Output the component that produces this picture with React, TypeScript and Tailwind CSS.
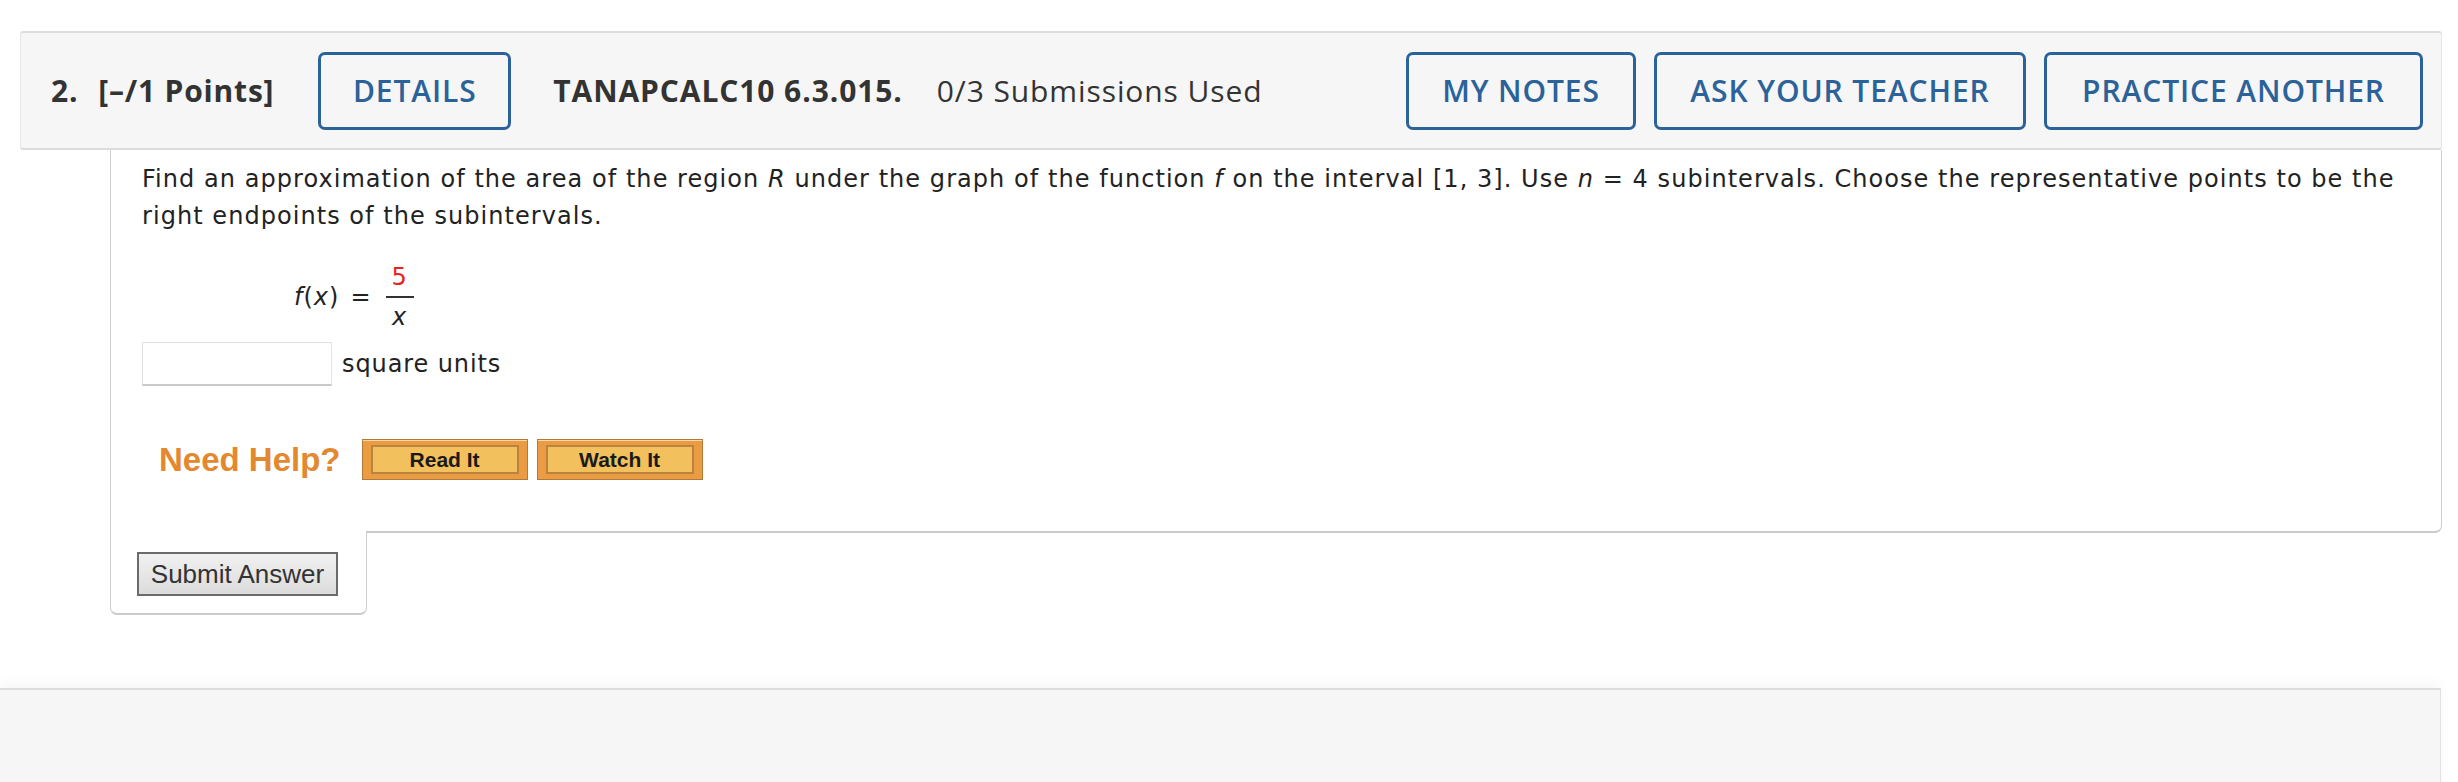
import React from "react";

const verdana = { fontFamily: '"DejaVu Sans", Verdana, sans-serif' };

function HeaderButton({ label, w }: { label: string; w: string }) {
  return (
    <div
      className={`${w} h-[78px] flex items-center justify-center rounded-[7px] border-[3px] border-[#2b6299] text-[#2b6299] text-[30px] font-semibold tracking-[0.9px]`}
    >
      {label}
    </div>
  );
}

function HelpButton({ label }: { label: string }) {
  return (
    <div className="w-[166px] h-[41px] border border-[#b07a38] bg-[#eb9c42] p-[5px_8px] shadow-[inset_0_1px_0_#f8d9a8]">
      <div
        className="h-full w-full border-2 border-[#b8843f] bg-[#f2c05d] flex items-center justify-center text-[21px] font-bold text-[#1a1a1a]"
        style={{ fontFamily: '"Liberation Sans", Arial, sans-serif' }}
      >
        {label}
      </div>
    </div>
  );
}

export default function App() {
  return (
    <div className="w-[2458px] h-[782px] overflow-hidden bg-white text-[#333]">
      <div className="pt-[31px] pl-[20px] pr-[16px]">
        {/* Header */}
        <div
          className="h-[119px] bg-[#f6f6f6] border-t-2 border-b-2 border-x border-t-[#dddddd] border-b-[#dcdcdc] border-x-[#e6e6e6] rounded-[3px] flex items-center pl-[30px] pr-[18px]"
          style={{ fontFamily: '"Open Sans", sans-serif' }}
        >
          <span className="text-[30px] font-bold text-[#333] tracking-[0.8px]">2.</span>
          <span className="ml-[20px] text-[30px] font-bold text-[#333] tracking-[0.8px]">[–/1 Points]</span>
          <div className="ml-[44px]">
            <HeaderButton label="DETAILS" w="w-[193px]" />
          </div>
          <span className="ml-[42px] text-[30px] font-bold text-[#333] tracking-[0.9px]">TANAPCALC10 6.3.015.</span>
          <span className="ml-[34px] text-[30px] text-[#333] tracking-[0.9px]">0/3 Submissions Used</span>
          <div className="flex-1" />
          <div className="flex gap-[18px]">
            <HeaderButton label="MY NOTES" w="w-[230px]" />
            <HeaderButton label="ASK YOUR TEACHER" w="w-[372px]" />
            <HeaderButton label="PRACTICE ANOTHER" w="w-[379px]" />
          </div>
        </div>

        {/* Question panel */}
        <div className="ml-[90px]">
          <div
            className="border-x border-b-2 border-x-[#cfcfcf] border-b-[#cacaca] rounded-br-[7px] pl-[31px] pr-[30px] pt-[11px] pb-[47px] bg-white"
            style={verdana}
          >
            <p className="text-[24px] leading-[37px] text-[#222] tracking-[1.05px]">
              Find an approximation of the area of the region <i>R</i> under the graph of the function <i>f</i> on the interval [1, 3]. Use <i>n</i> = 4 subintervals. Choose the representative points to be the right endpoints of the subintervals.
            </p>

            <div className="mt-[29px] ml-[152px] flex items-center text-[24px] text-[#222] tracking-[1px]">
              <span className="leading-[26px]">
                <i>f</i>(<i>x</i>)
              </span>
              <span className="ml-[11px] leading-[26px]">=</span>
              <div className="ml-[14px] flex flex-col items-stretch w-[28px]">
                <div className="leading-[26px] pb-[6px] text-center text-[#e8231f]">5</div>
                <div className="h-[1.5px] bg-[#333]" />
                <div className="leading-[26px] pt-[6px] text-center">
                  <i>x</i>
                </div>
              </div>
            </div>

            <div className="mt-[12px] flex items-center">
              <div className="w-[190px] h-[44px] border border-[#e3e3e3] border-b-2 border-b-[#c9c9c9] bg-white" />
              <span className="ml-[10px] text-[24px] text-[#222] tracking-[0.9px]">square units</span>
            </div>

            <div className="mt-[49px] flex items-center">
              <span
                className="ml-[17px] text-[33px] font-bold text-[#e4882f]"
                style={{ fontFamily: '"Liberation Sans", Arial, sans-serif' }}
              >
                Need Help?
              </span>
              <div className="ml-[21px] flex gap-[9px]">
                <HelpButton label="Read It" />
                <HelpButton label="Watch It" />
              </div>
            </div>
          </div>

          {/* Submit tab */}
          <div className="-mt-[2px] w-[257px] h-[84px] bg-white border-x border-b-2 border-x-[#cfcfcf] border-b-[#cacaca] rounded-b-[7px] pl-[26px] pt-[21px]">
            <div
              className="w-[201px] h-[44px] border-2 border-[#6b6b6b] bg-gradient-to-b from-[#f1f1f1] to-[#dcdcdc] flex items-center justify-center text-[26px] text-[#333]"
              style={{ fontFamily: '"Liberation Sans", Arial, sans-serif' }}
            >
              Submit Answer
            </div>
          </div>
        </div>
      </div>

      {/* Next question panel */}
      <div className="mt-[73px] w-[2441px] h-[120px] bg-[#f6f6f6] border-t-2 border-r border-t-[#dddddd] border-r-[#e2e2e2] shadow-[0_-6px_10px_rgba(0,0,0,0.03)]" />
    </div>
  );
}
